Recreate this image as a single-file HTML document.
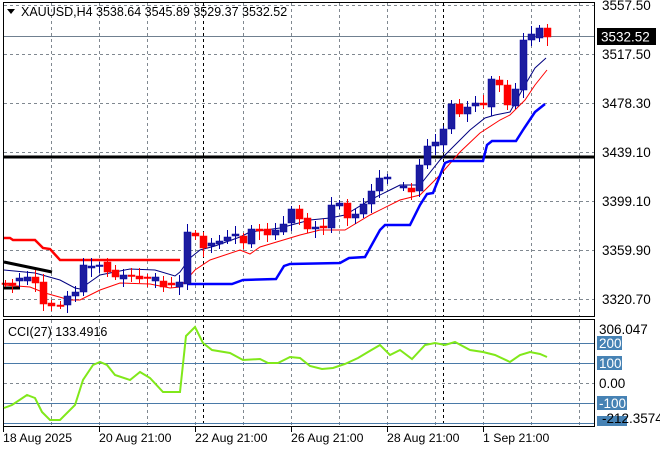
<!DOCTYPE html>
<html><head><meta charset="utf-8"><style>
body{margin:0;background:#fff;width:660px;height:450px;overflow:hidden}
svg{display:block;font-family:"Liberation Sans",sans-serif}
</style></head><body>
<svg id="s" width="660" height="450" xmlns="http://www.w3.org/2000/svg">
<rect width="660" height="450" fill="#fff"/>
<g id="grid" stroke="#808890" stroke-dasharray="3,3" stroke-width="1"></g>
<line x1="203.5" y1="3" x2="203.5" y2="316" stroke="#000" stroke-dasharray="3,3"/>
<line x1="443.5" y1="3" x2="443.5" y2="316" stroke="#000" stroke-dasharray="3,3"/>
<line x1="203.5" y1="319" x2="203.5" y2="427" stroke="#000" stroke-dasharray="3,3"/>
<line x1="443.5" y1="319" x2="443.5" y2="427" stroke="#000" stroke-dasharray="3,3"/>
<line x1="4" y1="36.5" x2="594" y2="36.5" stroke="#708090"/>
<line x1="4" y1="157" x2="594" y2="157" stroke="#000" stroke-width="3"/>
<polyline fill="none" stroke="#f00" stroke-width="2.5" points="4,238 10,238 13,240 35,240 43,248 50,249 60,260 180,260"/>
<polyline fill="none" stroke="#000" stroke-width="3" points="4,262 52,272"/>
<polyline fill="none" stroke="#000" stroke-width="3" points="4,288 20,288"/>
<polyline fill="none" stroke="#000080" stroke-width="1" points="4,270 35,273 60,280 75,288 80,289 100,275 130,269 155,270 175,276 180,272 190,258 200,250 215,246 240,237 250,232 280,228 310,220 330,218 345,215 370,200 390,190 400,185 420,185 440,160 450,150 470,130 485,118 495,115 510,112 525,85 535,68 546,58"/>
<polyline fill="none" stroke="#f00" stroke-width="1" points="4,285 30,287 45,293 70,300 80,300 100,290 120,283 150,284 170,288 180,287 195,270 210,260 240,250 250,254 260,247 300,235 320,230 345,230 370,215 400,200 420,195 440,175 460,152 480,133 500,120 510,115 525,100 535,85 547,70"/>
<polyline fill="none" stroke="#0000ff" stroke-width="2.5" points="188,284 232,284 243,280 276,279 284,266 290,264 340,263 349,258 365,257 380,230 385,225 410,225 420,205 427,194 433,193 445,163 450,161 483,161 487,145 492,141 516,141 523,130 535,112 545,104"/>
<g id="c"></g>
<rect x="3.5" y="2.5" width="591" height="314" fill="none" stroke="#000"/>
<rect x="3.5" y="319.5" width="591" height="107" fill="none" stroke="#000"/>
<g stroke="#4a7aa8" stroke-width="1">
<line x1="4" y1="343.5" x2="594" y2="343.5"/><line x1="4" y1="363.5" x2="594" y2="363.5"/>
<line x1="4" y1="403.5" x2="594" y2="403.5"/><line x1="4" y1="423.5" x2="594" y2="423.5"/></g>
<line x1="4" y1="383.5" x2="594" y2="383.5" stroke="#808890" stroke-dasharray="3,3"/>
<polyline fill="none" stroke="#80e81a" stroke-width="2" points="4,408 12,405 27,395 35,398 42,412 50,420 60,420 75,405 83,380 93,365 100,362 107,365 115,375 130,380 140,372 150,378 163,392 180,392 186,336 195,327 203,343 212,350 230,353 243,360 260,359 268,363 278,363 290,357 300,358 310,366 322,369 333,368 345,364 358,358 368,352 380,345 390,355 400,350 412,359 425,345 435,343 445,345 455,342 470,350 483,352 495,355 510,362 520,355 530,352 540,354 547,357"/>
<text x="8" y="336" font-size="12.5" fill="#000">CCI(27) 133.4916</text>
<path d="M7,9 L15,9 L11,14Z" fill="#000"/>
<text x="21" y="16" font-size="12.5" fill="#000">XAUUSD,H4  3538.64 3545.89 3529.37 3532.52</text>
<g font-size="13.5" fill="#000">
<text x="602" y="10">3557.50</text>
<text x="602" y="59">3517.50</text>
<text x="602" y="108">3478.30</text>
<text x="602" y="157">3439.10</text>
<text x="602" y="206">3399.10</text>
<text x="602" y="255">3359.90</text>
<text x="602" y="304">3320.70</text>
</g>
<rect x="597" y="28" width="59" height="17" fill="#000"/>
<text x="601" y="41.5" font-size="13.5" fill="#fff">3532.52</text>
<g font-size="13.5">
<text x="599" y="334" fill="#000">306.047</text>
<rect x="597" y="336" width="25" height="14" fill="#4682b4"/><text x="599" y="348" fill="#fff">200</text>
<rect x="597" y="356" width="25" height="14" fill="#4682b4"/><text x="599" y="368" fill="#fff">100</text>
<text x="599" y="388" fill="#000">0.00</text>
<rect x="597" y="396" width="30" height="14" fill="#4682b4"/><text x="599" y="408" fill="#fff">-100</text>
<rect x="597" y="416" width="30" height="10" fill="#4682b4"/><text x="602" y="423" fill="#000">-212.3574</text>
</g>
<g stroke="#000"><line x1="3.5" y1="427" x2="3.5" y2="432"/><line x1="99.5" y1="427" x2="99.5" y2="432"/><line x1="195.5" y1="427" x2="195.5" y2="432"/><line x1="291.5" y1="427" x2="291.5" y2="432"/><line x1="387.5" y1="427" x2="387.5" y2="432"/><line x1="483.5" y1="427" x2="483.5" y2="432"/></g>
<g font-size="12.3" fill="#000">
<text x="3" y="442">18 Aug 2025</text><text x="99" y="442">20 Aug 21:00</text><text x="195" y="442">22 Aug 21:00</text>
<text x="291" y="442">26 Aug 21:00</text><text x="387" y="442">28 Aug 21:00</text><text x="483" y="442">1 Sep 21:00</text></g>
</svg>
<script>
var ns="http://www.w3.org/2000/svg";
function el(p,t,a){var e=document.createElementNS(ns,t);for(var k in a)e.setAttribute(k,a[k]);p.appendChild(e);return e;}
var g=document.getElementById('grid');
[51,99,147,195,243,291,339,387,435,483,531,579].forEach(function(x){el(g,'line',{x1:x+.5,y1:3,x2:x+.5,y2:316});el(g,'line',{x1:x+.5,y1:320,x2:x+.5,y2:427});});
[5,54,103,152,201,250,299].forEach(function(y){el(g,'line',{x1:4,y1:y+.5,x2:594,y2:y+.5});});
var C=[[5,283,284],[12,283,285],[19,281,278],[27,281,277],[35,277,283],[43,282,304],[51,303,306],[60,305,306],[67,305,296],[75,296,292],[83,292,265],[91,268,266],[99,266,265],[107,262,272],[115,270,277],[123,279,275],[131,275,276],[139,276,279],[147,277,278],[155,281,277],[163,281,287],[171,283,285],[179,287,282],[187,284,232],[195,233,236],[203,236,248],[211,246,243],[219,244,241],[227,241,237],[235,236,234],[243,236,243],[251,244,229],[259,229,231],[267,229,235],[275,235,230],[283,232,224],[291,223,209],[299,209,219],[307,218,229],[315,229,227],[323,226,228],[331,228,205],[339,206,203],[347,203,218],[355,218,214],[363,214,204],[371,204,191],[379,191,178],[387,179,177],[403,188,186],[411,188,192],[419,191,165],[427,165,146],[435,146,142],[443,145,129],[451,129,104],[459,104,114],[467,114,107],[475,106,103],[483,103,105],[491,107,79],[499,80,85],[507,85,105],[515,106,89],[523,90,40],[531,40,34],[539,38,28],[547,28,37]];
var cg=document.getElementById('c');
C.forEach(function(c,i){var x=c[0],o=c[1],cl=c[2];var bull=cl<o;
var top=Math.min(o,cl),bot=Math.max(o,cl);var h=3+(i*7%6),l=3+(i*5%7);
el(cg,'line',{x1:x+.5,y1:top-h,x2:x+.5,y2:bot+l,stroke:bull?'#0000a0':'#ff0000'});
el(cg,'rect',{x:x-3,y:top,width:7,height:Math.max(bot-top,1.5),fill:bull?'#1c1ca0':'#ff0000',stroke:bull?'#0000a0':'#ff0000','stroke-width':0.5});});
</script>
</body></html>
